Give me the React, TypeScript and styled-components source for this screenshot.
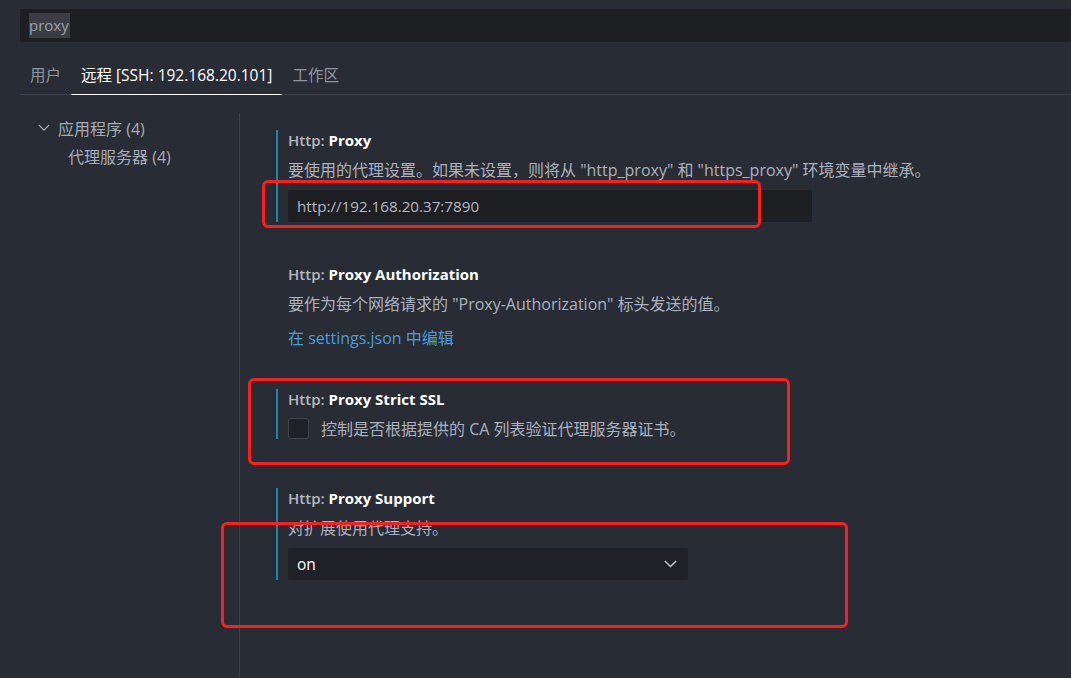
import React from "react";
import styled, { createGlobalStyle } from "styled-components";

const Global = createGlobalStyle`
  html, body {
    margin: 0;
    padding: 0;
    background: #282c34;
    overflow: hidden;
  }
  body {
    font-family: "Open Sans", "Noto Sans CJK SC", sans-serif;
    font-size: 16px;
    color: #abb2bf;
  }
`;

const Page = styled.div`
  width: 1071px;
  height: 678px;
  background: #282c34;
  display: flex;
  flex-direction: column;
  overflow: hidden;
`;

const SearchBar = styled.div`
  margin: 9px 0 0 20px;
  height: 33px;
  background: #1e1f22;
  border-radius: 2px 0 0 2px;
  display: flex;
  align-items: center;
  padding-left: 9px;
`;

const Selected = styled.span`
  background: #3a3d44;
  color: #9ba1ab;
  font-size: 15px;
  line-height: 25px;
  padding: 0 1px 0 0;
`;

const TabRow = styled.div`
  display: flex;
  margin: 23px 0 0 20px;
  box-shadow: inset 0 -1px 0 #3e424d;
`;

const Tab = styled.div<{ $active?: boolean }>`
  padding: 0 10px 8px;
  line-height: 21px;
  font-size: 15.5px;
  color: ${(p) => (p.$active ? "#ffffff" : "#8f959f")};
  border-bottom: 1px solid ${(p) => (p.$active ? "#ffffff" : "transparent")};
`;

const Body = styled.div`
  flex: 1;
  display: flex;
  padding-top: 18px;
`;

const Sidebar = styled.div`
  width: 240px;
  border-right: 1px solid #3b3f4a;
  padding-top: 1px;
  box-sizing: border-box;
`;

const TreeRow = styled.div<{ $depth: number }>`
  display: flex;
  align-items: center;
  height: 28px;
  padding-left: ${(p) => (p.$depth === 0 ? 38 : 68)}px;
  color: #a6acb6;
  font-size: 16px;
  gap: 8px;
`;

const Content = styled.div`
  flex: 1;
  padding: 17px 0 0 36px;
  display: flex;
  flex-direction: column;
`;

const Item = styled.div<{ $modified?: boolean; $after?: number }>`
  position: relative;
  display: flex;
  flex-direction: column;
  padding-left: 10px;
  border-left: 2px solid ${(p) => (p.$modified ? "#1b84a8" : "transparent")};
  margin-bottom: ${(p) => p.$after ?? 41}px;
`;

const Title = styled.div`
  line-height: 20px;
  font-size: 15px;
  font-weight: 600;
  color: #b4b8bf;
  & > b {
    color: #ffffff;
    font-weight: 700;
  }
`;

const Desc = styled.div`
  margin-top: 10px;
  line-height: 20px;
  font-size: 16px;
  color: #abb2bf;
  white-space: nowrap;
`;

const TextInput = styled.div`
  margin-top: 10px;
  width: 524px;
  height: 32px;
  box-sizing: border-box;
  background: #1e1f23;
  border-radius: 2px;
  display: flex;
  align-items: center;
  padding-left: 9px;
  color: #b2b8c2;
  font-size: 15.2px;
`;

const Link = styled.div`
  margin-top: 14px;
  line-height: 20px;
  color: #4d9cd8;
  font-size: 16px;
`;

const CheckRow = styled.div`
  margin-top: 8px;
  display: flex;
  align-items: center;
  height: 22px;
  gap: 12px;
  color: #abb2bf;
  font-size: 16px;
  white-space: nowrap;
`;

const CheckBox = styled.div`
  width: 21px;
  height: 21px;
  box-sizing: border-box;
  border: 1px solid #3f434d;
  border-radius: 3px;
  background: #1f2128;
`;

const Select = styled.div`
  margin-top: 10px;
  width: 400px;
  height: 32px;
  box-sizing: border-box;
  background: #1f2128;
  border-radius: 2px;
  display: flex;
  align-items: center;
  justify-content: space-between;
  padding: 0 11px 0 9px;
  color: #ffffff;
  font-size: 15.5px;
`;

const Annotation = styled.div<{ $l: number; $t: number; $w: number; $h: number }>`
  position: absolute;
  left: ${(p) => p.$l}px;
  top: ${(p) => p.$t}px;
  width: ${(p) => p.$w}px;
  height: ${(p) => p.$h}px;
  box-sizing: border-box;
  border: 3px solid #ff1d1d;
  border-radius: 6px;
  pointer-events: none;
`;

const Chevron = ({ size = 12, color = "#c5c8ce" }: { size?: number; color?: string }) => (
  <svg width={size} height={size * 0.6} viewBox="0 0 12 7" fill="none">
    <path d="M0.8 0.8 L6 6 L11.2 0.8" stroke={color} strokeWidth="1.3" />
  </svg>
);

export default function App() {
  return (
    <Page>
      <Global />
      <SearchBar>
        <Selected>proxy</Selected>
      </SearchBar>
      <TabRow>
        <Tab>用户</Tab>
        <Tab $active>远程 [SSH: 192.168.20.101]</Tab>
        <Tab>工作区</Tab>
      </TabRow>
      <Body>
        <Sidebar>
          <TreeRow $depth={0}>
            <Chevron size={12} color="#a6acb6" />
            <span>应用程序 (4)</span>
          </TreeRow>
          <TreeRow $depth={1}>代理服务器 (4)</TreeRow>
        </Sidebar>
        <Content>
          <Item $modified $after={42}>
            <Title>
              Http: <b>Proxy</b>
            </Title>
            <Desc>要使用的代理设置。如果未设置，则将从 "http_proxy" 和 "https_proxy" 环境变量中继承。</Desc>
            <TextInput>http://192.168.20.37:7890</TextInput>
            <Annotation $l={-16} $t={50} $w={499} $h={48} />
          </Item>
          <Item>
            <Title>
              Http: <b>Proxy Authorization</b>
            </Title>
            <Desc>要作为每个网络请求的 "Proxy-Authorization" 标头发送的值。</Desc>
            <Link>在 settings.json 中编辑</Link>
          </Item>
          <Item $modified $after={49}>
            <Title>
              Http: <b>Proxy Strict SSL</b>
            </Title>
            <CheckRow>
              <CheckBox />
              <span>控制是否根据提供的 CA 列表验证代理服务器证书。</span>
            </CheckRow>
            <Annotation $l={-30} $t={-11} $w={542} $h={87} />
          </Item>
          <Item $modified>
            <Title>
              Http: <b>Proxy Support</b>
            </Title>
            <Desc>对扩展使用代理支持。</Desc>
            <Select>
              <span>on</span>
              <Chevron size={13} />
            </Select>
            <Annotation $l={-57} $t={34} $w={627} $h={106} />
          </Item>
        </Content>
      </Body>
    </Page>
  );
}
